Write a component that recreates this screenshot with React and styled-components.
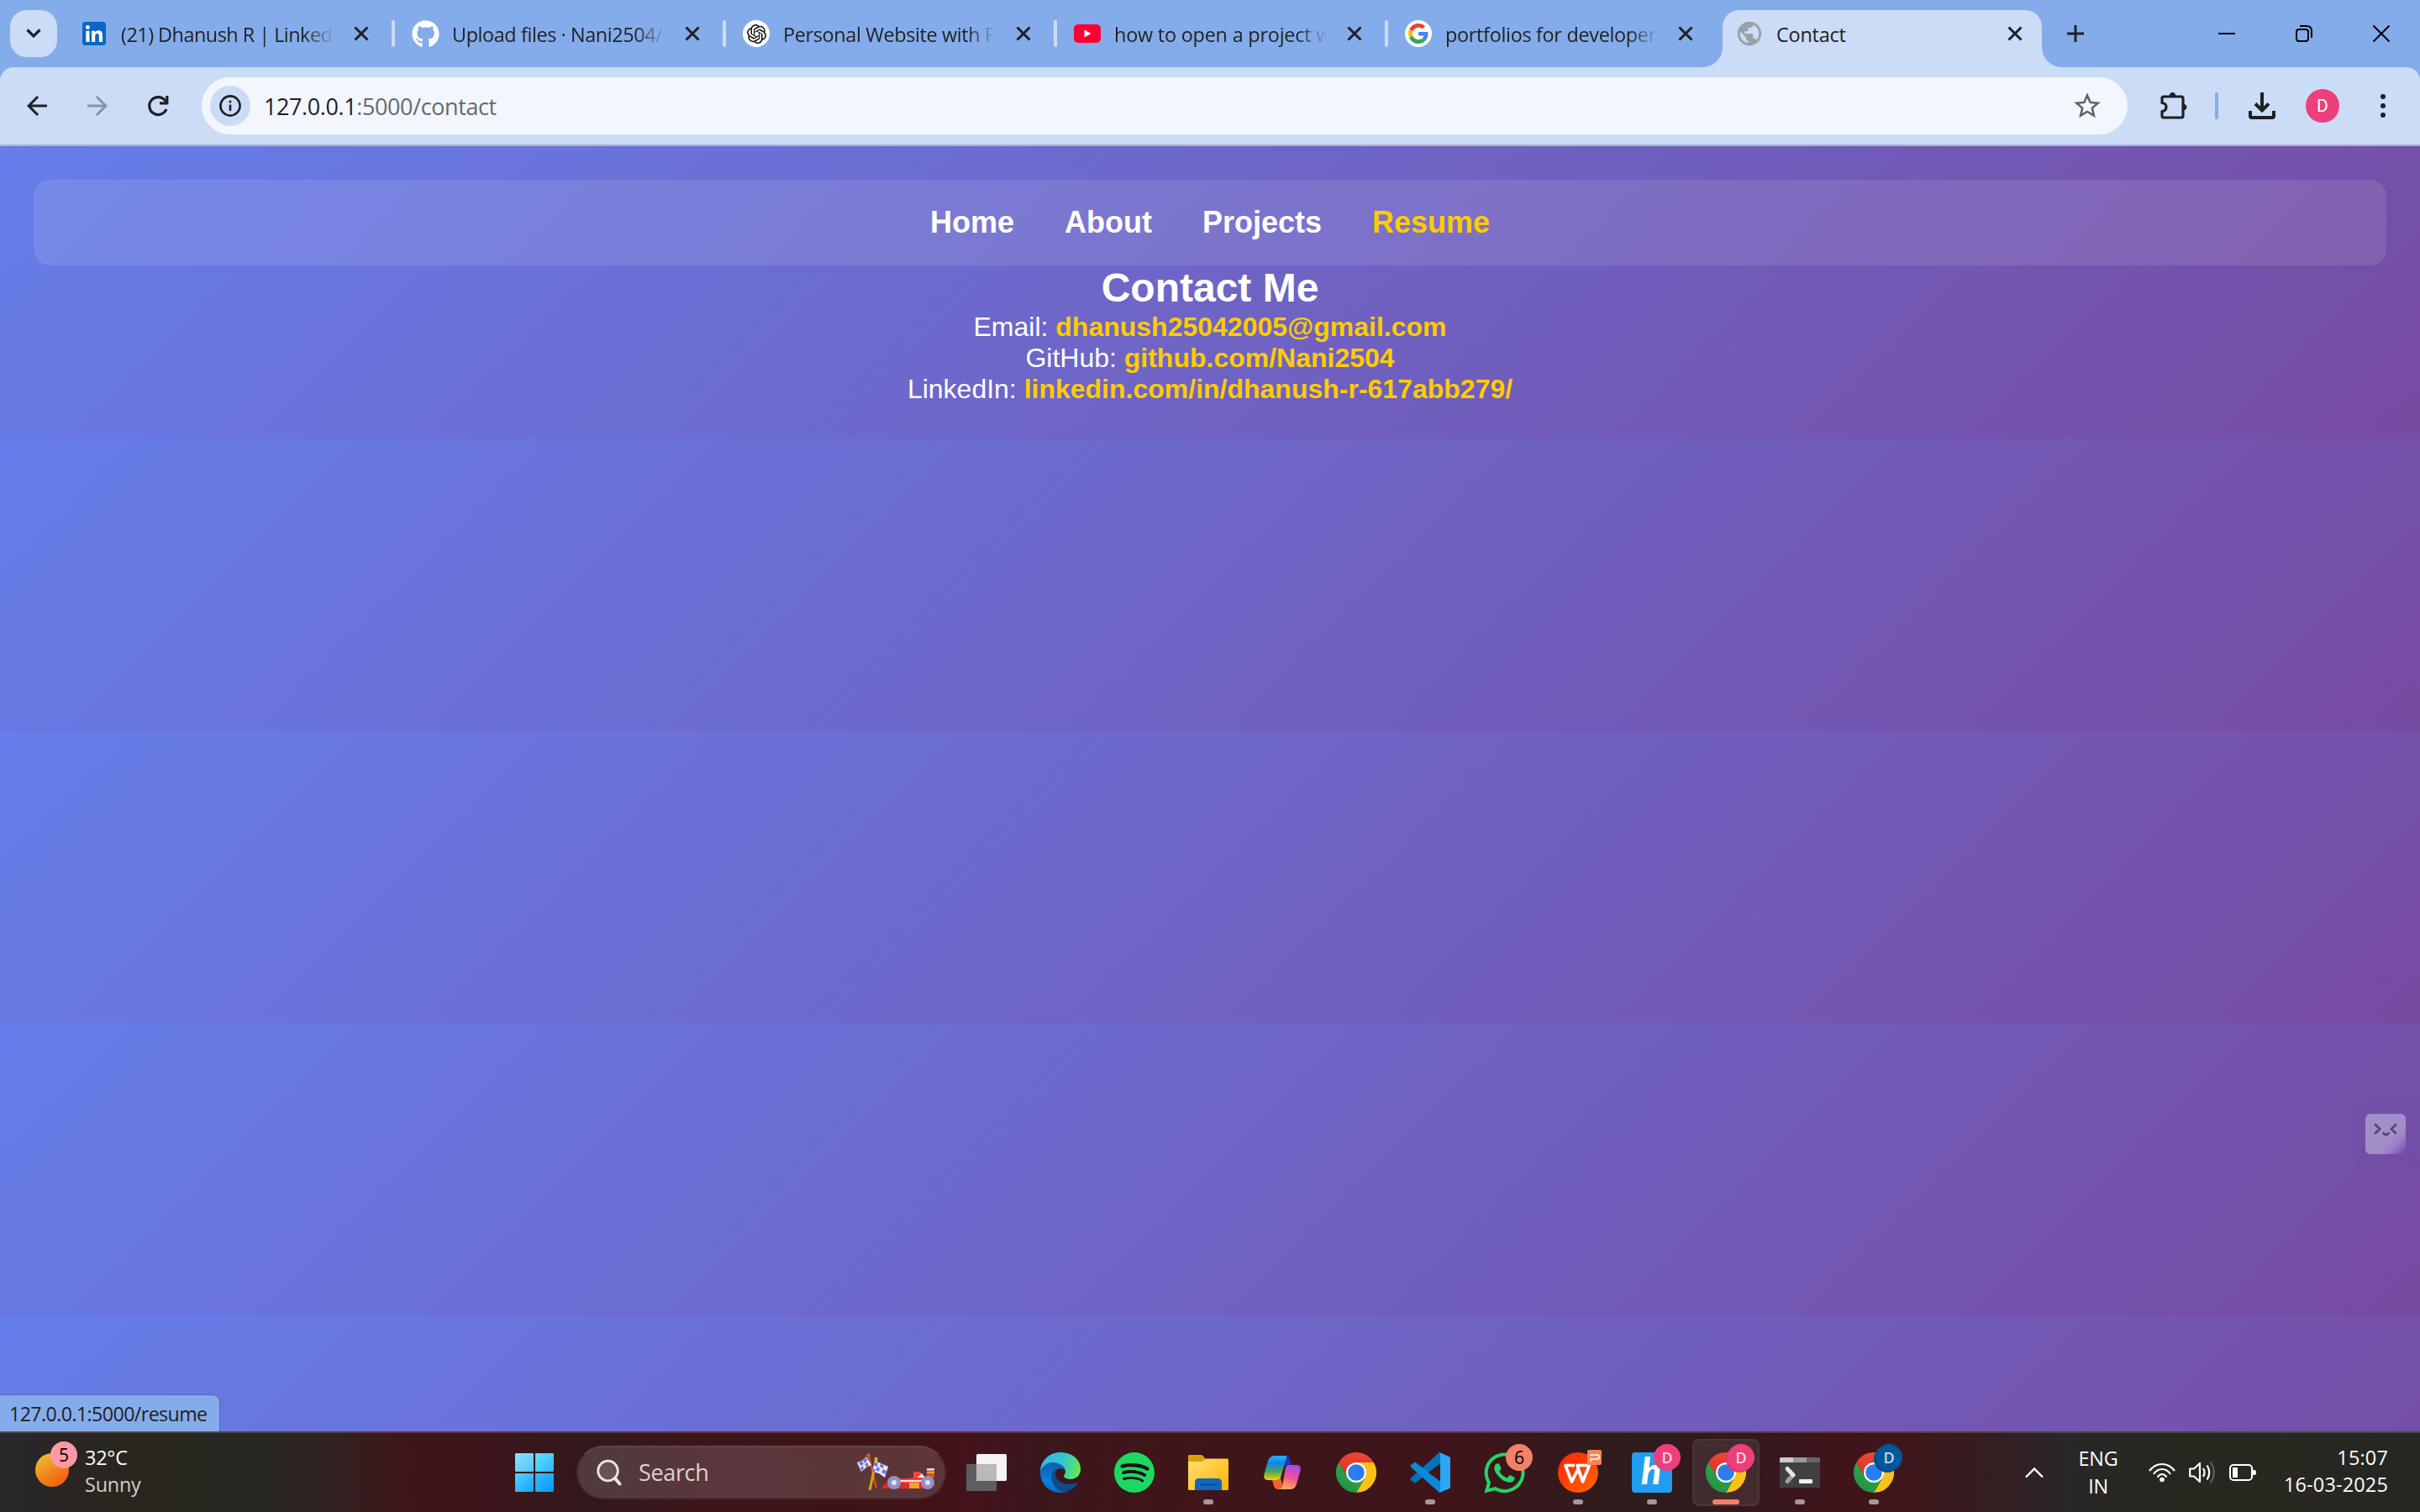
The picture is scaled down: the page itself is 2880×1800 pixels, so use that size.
import React from "react";
import styled, { createGlobalStyle, css } from "styled-components";
import { FaGithub, FaLinkedin, FaWhatsapp } from "react-icons/fa";
import { SiOpenai, SiSpotify } from "react-icons/si";
import { MdPublic, MdStarBorder, MdArrowBack, MdArrowForward } from "react-icons/md";

const ui = `"Open Sans", "Noto Sans", sans-serif`;

const Global = createGlobalStyle`
  * { box-sizing: border-box; margin: 0; padding: 0; }
  html, body { width: 2880px; height: 1800px; overflow: hidden; }
  svg { display: block; flex: none; }
`;

const Screen = styled.div`
  position: relative;
  display: flex;
  flex-direction: column;
  width: 2880px;
  height: 1800px;
  overflow: hidden;
  font-family: ${ui};
`;

/* ---------- tab strip ---------- */
const TabStrip = styled.div`
  display: flex;
  height: 80px;
  flex: none;
  background: #85acea;
`;
const TabSearch = styled.button`
  display: flex;
  align-items: center;
  justify-content: center;
  width: 56px;
  height: 56px;
  margin: 12px 4px 0 12px;
  border: 0;
  border-radius: 20px;
  background: #cbdcf7;
`;
const Tab = styled.div`
  display: flex;
  align-items: center;
  width: 394px;
  height: 80px;
  flex: none;
  ${(p) =>
    p.$active &&
    css`
      position: relative;
      width: 380px;
      height: 68px;
      margin: 12px 0 0 8px;
      padding: 0 0 12px 16px;
      border-radius: 20px 20px 0 0;
      background: #cbdcf7;
      &::before,
      &::after {
        content: "";
        position: absolute;
        bottom: 0;
        width: 24px;
        height: 24px;
      }
      &::before {
        left: -24px;
        background: radial-gradient(circle at 0 0, transparent 23.5px, #cbdcf7 24.5px);
      }
      &::after {
        right: -24px;
        background: radial-gradient(circle at 100% 0, transparent 23.5px, #cbdcf7 24.5px);
      }
    `}
`;
const TabRule = styled.i`
  width: 4px;
  height: 32px;
  margin-right: 20px;
  border-radius: 2px;
  background: ${(p) => (p.$hidden ? "transparent" : "#cbdcf7")};
`;
const Favicon = styled.span`
  display: flex;
  align-items: center;
  justify-content: center;
  width: 32px;
  height: 32px;
  flex: none;
  margin-right: 16px;
  border-radius: 50%;
  background: ${(p) => (p.$disc ? "#fff" : "transparent")};
`;
const LinkedInTile = styled.span`
  display: flex;
  align-items: center;
  justify-content: center;
  width: 28px;
  height: 28px;
  overflow: hidden;
  border-radius: 2px;
  background: #fff;
`;
const TabTitle = styled.span`
  width: ${(p) => (p.$fade ? 258 : 252)}px;
  flex: none;
  margin-right: ${(p) => (p.$fade ? 16 : 20)}px;
  padding-top: 2px;
  white-space: pre;
  font-size: 23.4px;
  line-height: 36px;
  letter-spacing: ${(p) => p.$track || 0}px;
  color: #1f2023;
  ${(p) => p.$fade && `mask-image: linear-gradient(to right, #000 218px, transparent 254px);`}
`;
const NewTab = styled.span`
  display: flex;
  align-items: center;
  margin-left: 30px;
`;
const WindowButtons = styled.div`
  display: flex;
  align-items: center;
  gap: 72px;
  margin-left: auto;
  padding-right: 36px;
`;

/* ---------- toolbar ---------- */
const ToolbarBack = styled.div`
  flex: none;
  height: 94px;
  background: #85acea;
`;
const Toolbar = styled.div`
  display: flex;
  align-items: center;
  height: 94px;
  padding: 0 28px 2px 26px;
  border-radius: 16px 16px 0 0;
  background: #cbdcf7;
  box-shadow: inset 0 -2px 0 #a5b3cb;
`;
const NavButtons = styled.div`
  display: flex;
  align-items: center;
  gap: 36px;
  margin-right: 34px;
`;
const Omnibox = styled.div`
  display: flex;
  align-items: center;
  width: 2292px;
  height: 68px;
  flex: none;
  padding: 0 29px 0 10px;
  border-radius: 34px;
  background: #f3f7fd;
`;
const InfoChip = styled.span`
  display: flex;
  align-items: center;
  justify-content: center;
  width: 48px;
  height: 48px;
  margin-right: 16px;
  border-radius: 50%;
  background: #cbdcf7;
`;
const Url = styled.span`
  flex: 1;
  padding-top: 1px;
  font-size: 27px;
  line-height: 40px;
  letter-spacing: -0.4px;
  color: #66696e;
  b {
    font-weight: 400;
    color: #1f2023;
  }
`;
const ToolbarActions = styled.div`
  display: flex;
  align-items: center;
  margin-left: 36px;
`;
const ToolRule = styled.i`
  width: 4px;
  height: 32px;
  margin: 0 34px 0 32px;
  border-radius: 2px;
  background: #85acea;
`;
const Avatar = styled.span`
  display: flex;
  align-items: center;
  justify-content: center;
  width: 40px;
  height: 40px;
  margin: 0 36px 0 34px;
  border-radius: 50%;
  background: #ec407a;
  color: #fff;
  font: 400 21px Roboto, sans-serif;
`;
const Dots = styled.span`
  display: flex;
  flex-direction: column;
  align-items: center;
  gap: 5px;
  width: 32px;
  i {
    width: 6px;
    height: 6px;
    border-radius: 50%;
    background: #1f2023;
  }
`;

/* ---------- page ---------- */
const Page = styled.main`
  height: 1530px;
  flex: none;
  padding: 40px;
  text-align: center;
  color: #fff;
  font-family: "Liberation Sans", Arial, sans-serif;
  font-size: 32px;
  line-height: 37px;
  background: linear-gradient(135deg, #667eea, #764ba2) 0 0 / 2880px 348px repeat-y;
`;
const SiteNav = styled.nav`
  display: flex;
  align-items: center;
  justify-content: center;
  gap: 60px;
  height: 102px;
  border-radius: 20px;
  background: rgba(255, 255, 255, 0.1);
`;
const SiteLink = styled.a`
  font-size: 36px;
  line-height: 42px;
  font-weight: 700;
  color: ${(p) => (p.$hot ? "#ffcc00" : "#fff")};
`;
const Heading = styled.h1`
  padding-bottom: 2px;
  font-size: 48px;
  line-height: 53px;
`;
const ContactLink = styled.a`
  font-weight: 700;
  color: #ffcc00;
`;
const StatusBubble = styled.div`
  position: absolute;
  left: 0;
  bottom: 96px;
  width: 261px;
  height: 43px;
  padding-left: 11px;
  border-radius: 0 8px 0 0;
  background: #85acea;
  box-shadow: 0 0 0 1px rgba(70, 80, 170, 0.5);
  font-size: 23.2px;
  line-height: 44px;
  letter-spacing: -0.58px;
  white-space: nowrap;
  color: #1f2023;
`;
const Helper = styled.div`
  position: absolute;
  right: -10px;
  top: 1310px;
  width: 90px;
  height: 80px;
  padding: 16px 0 0 15px;
  border-radius: 12px;
  background: rgba(90, 60, 150, 0.06);
`;
const HelperFace = styled.div`
  width: 48px;
  height: 48px;
  border-radius: 6px;
  background: linear-gradient(135deg, #a18fc9 0 62%, #9a80c6 76%, #8047bb 96%);
`;

/* ---------- taskbar ---------- */
const Taskbar = styled.footer`
  display: flex;
  align-items: center;
  height: 96px;
  flex: none;
  padding-top: 2px;
  color: #fff;
  box-shadow: inset 0 2px 0 rgba(255, 255, 255, 0.16);
  background: linear-gradient(
    to right,
    #27282c 0, #2a2523 70px, #29261c 180px, #262822 290px, #302222 390px, #3e1719 470px,
    #3d151b 560px, #32191b 700px, #3d141a 850px, #3f1317 1080px, #44131c 1150px, #3b171c 1230px,
    #411519 1420px, #3c151a 1560px, #40141a 1720px, #2e1c1d 1930px, #33191d 2080px, #40141a 2190px,
    #3d171b 2280px, #321f22 2385px, #292727 2460px, #25271f 2590px, #292820 2700px, #242722 2880px
  );
`;
const Weather = styled.div`
  display: flex;
  flex: none;
  width: 613px;
  height: 94px;
  padding: 24px 0 0 42px;
`;
const SunIcon = styled.div`
  position: relative;
  width: 40px;
  height: 40px;
  border-radius: 50%;
  background: linear-gradient(145deg, #edbb32 12%, #f1861d 50%, #f26410 82%);
`;
const Badge = styled.span`
  position: absolute;
  top: ${(p) => p.$top}px;
  left: ${(p) => p.$left}px;
  display: flex;
  align-items: center;
  justify-content: center;
  width: 32px;
  height: 32px;
  border-radius: 50%;
  background: ${(p) => p.$bg};
  color: ${(p) => p.$fg || "#000"};
  font-size: ${(p) => (p.$letter ? 18 : 21)}px;
  font-weight: ${(p) => (p.$letter ? 600 : 400)};
  line-height: 32px;
  ${(p) => p.$ring && `box-shadow: -2px 2px 0 ${p.$ring};`}
`;
const WeatherText = styled.div`
  margin: -11px 0 0 19px;
  font-size: 23.4px;
  line-height: 32px;
  letter-spacing: -0.2px;
  span {
    display: block;
  }
  span + span {
    color: #cfcfcd;
  }
`;
const StartButton = styled.div`
  display: grid;
  flex: none;
  grid-template-columns: 22px 22px;
  gap: 2px;
  width: 46px;
  i {
    height: 22px;
    border-radius: 1px;
    background: linear-gradient(135deg, #8be2ff, #57c2fb);
  }
  i:nth-child(2) { background: linear-gradient(135deg, #62e2ff, #2fb4fb); }
  i:nth-child(3) { background: linear-gradient(135deg, #52d3fd, #1aa3fb); }
  i:nth-child(4) { background: linear-gradient(135deg, #36bdfc, #0898fb); }
`;
const SearchBox = styled.div`
  display: flex;
  align-items: center;
  flex: none;
  width: 440px;
  height: 64px;
  margin: 0 4px 0 27px;
  padding: 0 10px 0 22px;
  border: 2px solid rgba(255, 255, 255, 0.09);
  border-top-color: rgba(255, 255, 255, 0.2);
  border-radius: 32px;
  background: rgba(255, 255, 255, 0.15);
  background-clip: padding-box;
`;
const SearchLabel = styled.span`
  flex: 1;
  margin-left: 20px;
  font-size: 27px;
  line-height: 36px;
  letter-spacing: -0.35px;
  color: #ddd2d3;
`;
const Apps = styled.div`
  display: flex;
`;
const AppSlot = styled.div`
  position: relative;
  display: flex;
  align-items: center;
  justify-content: center;
  width: 80px;
  height: 80px;
  flex: none;
  margin: 0 4px;
  border-radius: 8px;
  ${(p) =>
    p.$active &&
    `background: rgba(255,255,255,.08); box-shadow: inset 0 0 0 2px rgba(255,255,255,.05);`}
  &::after {
    content: "";
    position: absolute;
    bottom: 2px;
    width: ${(p) => (p.$active ? 32 : 12)}px;
    height: 6px;
    border-radius: 3px;
    background: ${(p) => (p.$active ? "#f4806a" : p.$running ? "#a8979a" : "transparent")};
  }
`;
const HTile = styled.span`
  width: 48px;
  height: 48px;
  padding-right: 2px;
  border-radius: 4px;
  background: #219df1;
  color: #fff;
  text-align: center;
  font: italic 900 44px/42px Lato, sans-serif;
`;
const SpotifyDisc = styled.span`
  display: flex;
  border-radius: 50%;
  background: #161013;
`;
const WpsBadge = styled.svg`
  position: absolute;
  left: 51px;
  top: 13px;
`;
const Tray = styled.div`
  display: flex;
  align-items: center;
  margin-left: auto;
  padding-right: 38px;
`;
const TrayText = styled.div`
  width: ${(p) => p.$w}px;
  margin: ${(p) => p.$m};
  font-size: 23.4px;
  line-height: ${(p) => p.$lh}px;
  letter-spacing: ${(p) => p.$track}px;
  text-align: ${(p) => p.$align};
  span { display: block; }
`;
const TrayIcons = styled.div`
  display: flex;
  align-items: center;
  gap: 16px;
`;

/* ---------- drawings ---------- */
const Cross = () => (
  <svg width="24" height="24" viewBox="0 0 24 24" stroke="#1f2023" strokeWidth="3" fill="none">
    <path d="M4.500 4.500L19.500 19.500M19.500 4.500L4.500 19.500" />
  </svg>
);
const GoogleG = () => (
  <svg width="24" height="24" viewBox="0 0 48 48">
    <path fill="#EA4335" d="M24 9.5c3.54 0 6.71 1.22 9.21 3.6l6.85-6.85C35.9 2.38 30.47 0 24 0 14.62 0 6.51 5.38 2.56 13.22l7.98 6.19C12.43 13.72 17.74 9.5 24 9.5z" />
    <path fill="#4285F4" d="M46.98 24.55c0-1.57-.15-3.09-.38-4.55H24v9.02h12.94c-.58 2.96-2.26 5.48-4.78 7.18l7.73 6c4.51-4.18 7.09-10.36 7.09-17.65z" />
    <path fill="#FBBC05" d="M10.53 28.59c-.48-1.45-.76-2.99-.76-4.59s.27-3.14.76-4.59l-7.98-6.19C.92 16.46 0 20.12 0 24s.92 7.54 2.56 10.78l7.97-6.19z" />
    <path fill="#34A853" d="M24 48c6.48 0 11.93-2.13 15.89-5.81l-7.73-6c-2.15 1.45-4.92 2.3-8.16 2.3-6.26 0-11.57-4.22-13.47-9.91l-7.98 6.19C6.51 42.62 14.62 48 24 48z" />
  </svg>
);
const YouTube = () => (
  <svg width="32" height="22" viewBox="0 0 32 22">
    <rect width="32" height="22" rx="5" fill="#ff0033" />
    <path d="M12.5 6.5v9l8-4.500z" fill="#fff" />
  </svg>
);
const Chrome = () => (
  <svg width="48" height="48" viewBox="0 0 48 48">
    <defs>
      <linearGradient id="cg" x1="0" y1="1" x2=".6" y2="0">
        <stop offset="0" stopColor="#1e8e3e" />
        <stop offset="1" stopColor="#34a853" />
      </linearGradient>
      <linearGradient id="cr" x1="0" y1="1" x2="0" y2="0">
        <stop offset="0" stopColor="#d93025" />
        <stop offset="1" stopColor="#ee4535" />
      </linearGradient>
    </defs>
    <path fill="url(#cr)" d="M3.2 12A24 24 0 0 1 44.800 12L24 12L13.600 30z" />
    <path fill="#fcc118" d="M44.800 12A24 24 0 0 1 24 48L34.400 30L34.400 18L24 12z" />
    <path fill="url(#cg)" d="M24 48A24 24 0 0 1 3.2 12L13.600 30L24 36L34.400 30z" />
    <circle cx="24" cy="24" r="12" fill="#fff" />
    <circle cx="24" cy="24" r="9.800" fill="#2b7cee" />
  </svg>
);
const Edge = () => (
  <svg width="48" height="48" viewBox="0 0 48 48">
    <defs>
      <linearGradient id="e1" x1="0" y1=".4" x2="1" y2=".6">
        <stop offset="0" stopColor="#35b8f5" />
        <stop offset=".5" stopColor="#2fc5d0" />
        <stop offset="1" stopColor="#66eb4e" />
      </linearGradient>
      <linearGradient id="e2" x1="0" y1="0" x2="0" y2="1">
        <stop offset="0" stopColor="#0c5ba8" />
        <stop offset=".6" stopColor="#0b7fdd" />
        <stop offset="1" stopColor="#0b6cc9" />
      </linearGradient>
    </defs>
    <path fill="url(#e1)" d="M0 22C1 9 11 0 24 0c14 0 24 9 24 20 0 7-5 12-12 12-5 0-8-2-8-4 0-1 2-2 2-5 0-5-4-8-9-9C12 13 4 16 0 22z" />
    <path fill="url(#e2)" d="M0 23c2-7 8-11 15-11 8 0 15 5 15 11-1-3-3-4-6-4-4 0-7 4-7 9 0 9 7 18 14 19-2 .700-4 1-7 1C10 48 0 37 0 23z" />
    <path fill="#114a8f" d="M19 19c-5 3-7 9-5 15 2 8 9 14 17 13 6-2 11-6 13-10 .4-1-.4-1.600-1.400-1C32 41 18 36 18 25c0-3 1-5 4-6z" />
  </svg>
);
const VsCode = () => (
  <svg width="48" height="48" viewBox="0 0 48 48">
    <path fill="#0073b9" d="M35 0L48 6V14L36 14L6 36.500L1 33Q0 32 1 30.500z" />
    <path fill="#0a8ad6" d="M6 11.500L36 34L48 34V42L35 48L1 17.500Q0 16.500 1 15z" />
    <path fill="#2aa6f2" d="M34.500 0Q36 0 36 .5L46.500 5Q48 6 48 7V41Q48 42.500 46.500 43.300L35 48Q36 47.500 36 45V3Q36 .5 34.500 0z" />
    <path fill="#40141a" d="M36 13.500V34.500L22 24z" />
  </svg>
);
const Folder = () => (
  <svg width="48" height="42" viewBox="0 0 48 42">
    <defs>
      <linearGradient id="fo" x1="0" y1="0" x2="1" y2="1">
        <stop offset="0" stopColor="#ffe07a" />
        <stop offset=".5" stopColor="#ffca38" />
        <stop offset="1" stopColor="#f7b40c" />
      </linearGradient>
    </defs>
    <path fill="#e09f06" d="M0 1.500Q0 0 1.500 0H15Q17 0 18 1.500L21 5V10H0z" />
    <path fill="url(#fo)" d="M0 8H15Q17 8 18 7L20 5.500Q21 4.500 23 4.500H46.500Q48 4.500 48 6V40.500Q48 42 46.500 42H1.500Q0 42 0 40.500z" />
    <path fill="#0e69bd" d="M8 42V33Q8 28 13 28H35Q40 28 40 33V42z" />
    <path d="M15 35.500H33" stroke="#084b91" strokeWidth="2" strokeLinecap="round" />
  </svg>
);
const Copilot = () => (
  <svg width="44" height="40" viewBox="0 0 44 40">
    <defs>
      <linearGradient id="k1" x1=".3" y1="0" x2=".3" y2="1">
        <stop offset="0" stopColor="#27b1fb" />
        <stop offset=".3" stopColor="#0f86e8" />
        <stop offset=".65" stopColor="#4aa65a" />
        <stop offset="1" stopColor="#f2d500" />
      </linearGradient>
      <linearGradient id="k2" x1=".7" y1="0" x2=".4" y2="1">
        <stop offset="0" stopColor="#a24bea" />
        <stop offset=".5" stopColor="#ee4f95" />
        <stop offset="1" stopColor="#ffae51" />
      </linearGradient>
    </defs>
    <path fill="#1238c4" d="M20 0H27Q30 0 31 4L33 11H28Q24 11 23 14z" />
    <path fill="#f9602f" d="M10 29H17Q19 29 20 26L22 34Q22 40 17 40Q13 40 12 36z" />
    <path fill="url(#k1)" d="M13 0H25Q28 0 27 3L20 26Q19 29 15 29H5Q-1 29 .5 22L5 6Q7 0 13 0z" />
    <path fill="url(#k2)" d="M29 11H39Q45 11 43.500 18L39 34Q37 40 31 40H17Q21 40 22 36L26 14Q27 11 29 11z" />
  </svg>
);
const Wps = () => (
  <svg width="48" height="48" viewBox="0 0 48 48">
    <defs>
      <linearGradient id="wp" x1="0" y1="0" x2="1" y2="1">
        <stop offset="0" stopColor="#ff1d0d" />
        <stop offset="1" stopColor="#ff6a00" />
      </linearGradient>
    </defs>
    <circle cx="24" cy="24" r="24" fill="url(#wp)" />
    <path d="M20 15.500H9L16.500 35L24 20L29.500 35L37.500 15.500H23L29.500 34" fill="none" stroke="#fff" strokeWidth="3.600" strokeLinejoin="round" />
  </svg>
);
const Terminal = () => (
  <svg width="48" height="36" viewBox="0 0 48 36">
    <rect width="48" height="36" rx="1.500" fill="#404040" />
    <path d="M0 1.500Q0 0 1.500 0H16V6H0z" fill="#ccc" />
    <path d="M16 0H32V6H16z" fill="#999" />
    <path d="M32 0H46.500L48 1.500V6H32z" fill="#666" />
    <path d="M16 21L9 28.500" stroke="#a0a0a0" strokeWidth="5" strokeLinecap="round" />
    <path d="M9 13.500L16 21" stroke="#e6e6e6" strokeWidth="5" strokeLinecap="round" />
    <rect x="23" y="26" width="16" height="5" rx="1" fill="#f0f0f0" />
  </svg>
);
const TaskView = () => (
  <svg width="48" height="44" viewBox="0 0 48 44">
    <rect x="12" width="36" height="32" rx="1.500" fill="#f3f3f3" />
    <rect y="12" width="36" height="32" rx="1.500" fill="#5e5e5e" />
    <path d="M12 12H36V32H12z" fill="#b9b9b9" />
  </svg>
);
const Flags = () => (
  <svg width="94" height="46" viewBox="0 0 94 46">
    <path d="M14 4L23 42" stroke="#d9480c" strokeWidth="2.500" />
    <path d="M23 7L15 44" stroke="#d7a413" strokeWidth="3" />
    <circle cx="13.500" cy="2.500" r="2.200" fill="#e2571d" />
    <circle cx="22.500" cy="7" r="2.200" fill="#e0ac14" />
    <path d="M0 11L6 9L11 4L17 14L11 17L5 22z" fill="#e9e9fb" />
    <path d="M2 11L6 9.500L8 13L4 15zM10 5L12.500 8L9.500 12L7 9zM9 13L12 11L14 15L11 17zM4 17L7 15L8 19L5 21z" fill="#7474d4" />
    <path d="M21 9L28 12L37 16L33 29L26 24L18 22z" fill="#e9e9fb" />
    <path d="M21 10L25 12L24 16L20 15zM28 12L32 15L31 18L27 16zM24 16L27 18L26 22L22 20zM31 19L35 21L34 25L29 23zM19 18L22 20L21 23L18 22z" fill="#7474d4" />
    <path d="M30 42Q30 37 36 35L48 30H60L68 28V30H88V42H30z" fill="#e3292f" />
    <path d="M67 22H75L81 30H67z" fill="#f0443f" />
    <path d="M72 29L77 24L81 29z" fill="#eee" />
    <path d="M50 33H78" stroke="#f4dede" strokeWidth="2.500" />
    <rect x="62" y="35" width="12" height="7" fill="#f0a12a" />
    <rect x="83" y="18" width="9" height="11" fill="#e64a2b" />
    <rect x="83" y="18" width="9" height="2.500" fill="#e0dcea" />
    <rect x="83" y="22" width="9" height="2" fill="#f0a12a" />
    <circle cx="44" cy="35" r="8" fill="#9590c4" />
    <circle cx="44" cy="35" r="3" fill="#e5e2f2" />
    <circle cx="84" cy="35" r="8" fill="#9590c4" />
    <circle cx="84" cy="35" r="3" fill="#e5e2f2" />
  </svg>
);

const tabs = [
  { title: "(21) Dhanush R | Linked", track: -0.5, icon: <LinkedInTile><FaLinkedin size={32} color="#0a66c2" /></LinkedInTile> },
  { title: "Upload files · Nani2504/", track: -0.4, icon: <FaGithub size={33} color="#fff" /> },
  { title: "Personal Website with F", track: -0.35, disc: true, icon: <SiOpenai size={23} color="#111" /> },
  { title: "how to open a project w", track: -0.2, icon: <YouTube /> },
  { title: "portfolios for developers", track: -0.3, disc: true, icon: <GoogleG /> },
];

export default function App() {
  return (
    <Screen>
      <Global />
      <TabStrip>
        <TabSearch>
          <svg width="20" height="14" viewBox="0 0 20 14" fill="none" stroke="#1f2023" strokeWidth="3.200">
            <path d="M2.500 2.500L10 10L17.500 2.500" />
          </svg>
        </TabSearch>
        {tabs.map((t, i) => (
          <Tab key={t.title}>
            <TabRule $hidden={i === 0} />
            <Favicon $disc={t.disc}>{t.icon}</Favicon>
            <TabTitle $fade $track={t.track}>{t.title}</TabTitle>
            <Cross />
          </Tab>
        ))}
        <Tab $active>
          <Favicon><MdPublic size={34} color="#9aa0a6" /></Favicon>
          <TabTitle $track={-0.2}>Contact</TabTitle>
          <Cross />
        </Tab>
        <NewTab>
          <svg width="20" height="20" viewBox="0 0 20 20" stroke="#1f2023" strokeWidth="3">
            <path d="M0 10H20M10 0V20" />
          </svg>
        </NewTab>
        <WindowButtons>
          <svg width="20" height="20" viewBox="0 0 20 20" stroke="#000" strokeWidth="2"><path d="M0 10H20" /></svg>
          <svg width="20" height="20" viewBox="0 0 20 20" stroke="#000" strokeWidth="2" fill="none">
            <rect x="1" y="5" width="14" height="14" rx="3" />
            <path d="M5 1H13Q19 1 19 7V15" />
          </svg>
          <svg width="20" height="20" viewBox="0 0 20 20" stroke="#000" strokeWidth="2"><path d="M.5 .5L19.500 19.500M19.500 .5L.5 19.500" /></svg>
        </WindowButtons>
      </TabStrip>

      <ToolbarBack>
        <Toolbar>
          <NavButtons>
            <MdArrowBack size={36} color="#1f2023" />
            <MdArrowForward size={36} color="#8792a8" />
            <svg width="36" height="36" viewBox="-2 -2 36 36" fill="none" stroke="#1f2023" strokeWidth="3.200">
              <path d="M26 20A10.500 10.500 0 1 1 24.500 9.500L27 12.500" />
              <path d="M26.800 4V12.800H18" />
            </svg>
          </NavButtons>
          <Omnibox>
            <InfoChip>
              <svg width="26" height="26" viewBox="0 0 26 26" fill="none" stroke="#1f2023" strokeWidth="2.600">
                <circle cx="13" cy="13" r="11.600" />
                <path d="M13 11.500V19M13 6.800V9.400" />
              </svg>
            </InfoChip>
            <Url><b>127.0.0.1</b>:5000/contact</Url>
            <MdStarBorder size={38} color="#5f6368" />
          </Omnibox>
          <ToolbarActions>
            <svg width="36" height="36" viewBox="0 0 36 36">
              <path d="M8 7H28Q30 7 30 9V30Q30 32 28 32H7Q5 32 5 30V24.500Q10 24 10 19.500T5 14.500V9Q5 7 7 7z" fill="none" stroke="#1f2023" strokeWidth="3.200" strokeLinejoin="round" />
              <path d="M13.500 7a4 5 0 0 1 8 0zM30 15.500a4.500 4 0 0 1 0 8z" fill="#1f2023" />
            </svg>
            <ToolRule />
            <svg width="36" height="36" viewBox="0 0 36 36" fill="none" stroke="#1f2023" strokeWidth="4">
              <path d="M18 2V23M10 15.500L18 23.500L26 15.500" />
              <path d="M4 24V30Q4 32 6 32H30Q32 32 32 30V24" />
            </svg>
            <Avatar>D</Avatar>
            <Dots><i /><i /><i /></Dots>
          </ToolbarActions>
        </Toolbar>
      </ToolbarBack>

      <Page>
        <SiteNav>
          <SiteLink>Home</SiteLink>
          <SiteLink>About</SiteLink>
          <SiteLink>Projects</SiteLink>
          <SiteLink $hot>Resume</SiteLink>
        </SiteNav>
        <Heading>Contact Me</Heading>
        <p>Email: <ContactLink>dhanush25042005@gmail.com</ContactLink></p>
        <p>GitHub: <ContactLink>github.com/Nani2504</ContactLink></p>
        <p>LinkedIn: <ContactLink>linkedin.com/in/dhanush-r-617abb279/</ContactLink></p>
      </Page>

      <Taskbar>
        <Weather>
          <SunIcon><Badge $bg="#ff99a4" $top={-14} $left={18}>5</Badge></SunIcon>
          <WeatherText><span>32°C</span><span>Sunny</span></WeatherText>
        </Weather>
        <StartButton><i /><i /><i /><i /></StartButton>
        <SearchBox>
          <svg width="30" height="32" viewBox="0 0 30 32" fill="none" stroke="#e8e6e6" strokeLinecap="round">
            <circle cx="13.500" cy="14" r="11.800" strokeWidth="2.800" fill="rgba(255,255,255,.12)" />
            <path d="M22 23L27.500 29.500" strokeWidth="4" />
          </svg>
          <SearchLabel>Search</SearchLabel>
          <Flags />
        </SearchBox>
        <Apps>
          <AppSlot><TaskView /></AppSlot>
          <AppSlot><Edge /></AppSlot>
          <AppSlot><SpotifyDisc><SiSpotify size={48} color="#1ed760" /></SpotifyDisc></AppSlot>
          <AppSlot $running><Folder /></AppSlot>
          <AppSlot><Copilot /></AppSlot>
          <AppSlot><Chrome /></AppSlot>
          <AppSlot $running><VsCode /></AppSlot>
          <AppSlot>
            <FaWhatsapp size={55} color="#25d366" />
            <Badge $bg="#f4806a" $top={6} $left={42}>6</Badge>
          </AppSlot>
          <AppSlot $running>
            <Wps />
            <WpsBadge width="17" height="18" viewBox="0 0 17 18">
              <rect width="17" height="18" rx="2" fill="#ff8352" />
              <path d="M3 6H12Q14 6 14 8.500T12 11H4V14" fill="none" stroke="#fff" strokeWidth="1.600" />
            </WpsBadge>
          </AppSlot>
          <AppSlot $running>
            <HTile>h</HTile>
            <Badge $letter $bg="#ec407a" $fg="#fbd0df" $top={6} $left={42}>D</Badge>
          </AppSlot>
          <AppSlot $active>
            <Chrome />
            <Badge $letter $bg="#ec407a" $fg="#fbd0df" $ring="#dc3a70" $top={6} $left={42}>D</Badge>
          </AppSlot>
          <AppSlot $running><Terminal /></AppSlot>
          <AppSlot $running>
            <Chrome />
            <Badge $letter $bg="#01579b" $fg="#c3d9ea" $ring="#014c88" $top={6} $left={42}>D</Badge>
          </AppSlot>
        </Apps>
        <Tray>
          <svg width="22" height="14" viewBox="0 0 22 14" fill="none" stroke="#fff" strokeWidth="2.400">
            <path d="M1 12.500L11 2.500L21 12.500" />
          </svg>
          <TrayText $w={60} $m="0 30px 0 35px" $lh={33} $track={-0.2} $align="center">
            <span>ENG</span><span>IN</span>
          </TrayText>
          <TrayIcons>
            <svg width="32" height="24" viewBox="0 0 32 24" fill="none" stroke="#fff" strokeWidth="2.200">
              <path d="M1 10Q7 2 16 2T31 10M6 14Q10 8 16 8T26 14M10.500 17.500Q13 14 16 14T21.500 17.500" />
              <circle cx="16" cy="20.500" r="2.800" fill="#fff" stroke="none" />
            </svg>
            <svg width="32" height="28" viewBox="0 0 32 28" fill="none" stroke="#fff" strokeWidth="2.200">
              <path d="M1.200 9.500H6L13 3V25L6 18.500H1.200z" strokeLinejoin="round" />
              <path d="M17 9Q20 14 17 19M21.500 5.500Q27 14 21.500 22.500" />
              <path d="M25.500 1.500Q34 14 25.500 26.500" stroke="#5c5e58" />
            </svg>
            <svg width="32" height="20" viewBox="0 0 32 20" fill="none" stroke="#fff" strokeWidth="2">
              <rect x="1" y="1" width="26" height="18" rx="4" />
              <rect x="4" y="4" width="6" height="12" fill="#fff" stroke="none" />
              <path d="M28 7H30Q32 7 32 10T30 13H28z" fill="#fff" stroke="none" />
            </svg>
          </TrayIcons>
          <TrayText $w={140} $m="0 0 4px 17px" $lh={32} $track={0.2} $align="right">
            <span>15:07</span><span>16-03-2025</span>
          </TrayText>
        </Tray>
      </Taskbar>

      <StatusBubble>127.0.0.1:5000/resume</StatusBubble>
      <Helper>
        <HelperFace>
          <svg width="48" height="48" viewBox="0 0 48 48" fill="none" stroke="#53427f" strokeWidth="2.800" strokeLinecap="round">
            <path d="M12 13L17 18L12 23M36 13L31 18L36 23M21.500 23Q24.500 27 27.500 23" />
          </svg>
        </HelperFace>
      </Helper>
    </Screen>
  );
}
